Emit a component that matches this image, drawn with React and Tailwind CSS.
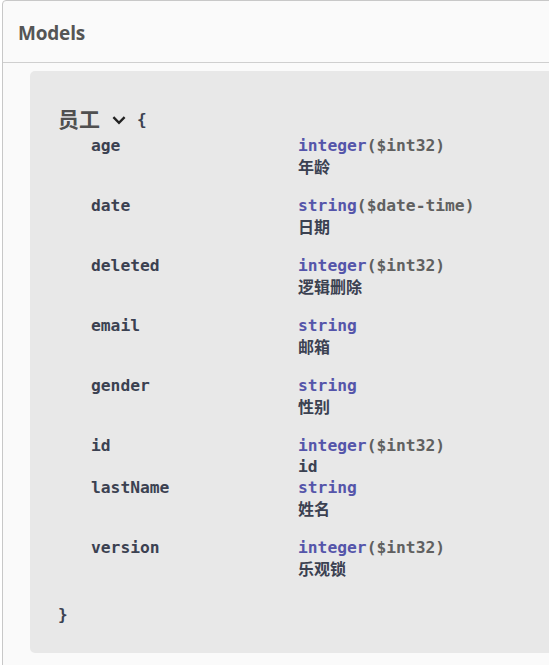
import React from 'react'

const mono = "font-['DejaVu_Sans_Mono','Liberation_Mono',monospace]"
const cjk = "font-['Noto_Sans_CJK_SC','Noto_Sans',sans-serif]"

const props = [
  { name: 'age', type: 'integer', format: '$int32', desc: '年龄' },
  { name: 'date', type: 'string', format: '$date-time', desc: '日期' },
  { name: 'deleted', type: 'integer', format: '$int32', desc: '逻辑删除' },
  { name: 'email', type: 'string', desc: '邮箱' },
  { name: 'gender', type: 'string', desc: '性别' },
  { name: 'id', type: 'integer', format: '$int32', desc: 'id', plain: true },
  { name: 'lastName', type: 'string', desc: '姓名' },
  { name: 'version', type: 'integer', format: '$int32', desc: '乐观锁' },
]

const Chevron = () => (
  <svg width="16" height="16" viewBox="0 0 20 20" className="mt-[2px]">
    <path d="M3 6.5 10 13.5 17 6.5" fill="none" stroke="#222" strokeWidth="3" />
  </svg>
)

const PropRow = ({ name, type, format, desc, plain }) => (
  <div className="grid grid-cols-[268px_1fr] text-[16.3px] font-semibold text-[#3b4151]">
    <div className={`${mono} pl-[61px] leading-[21px]`}>{name}</div>
    <div>
      <div className={`${mono} leading-[21px]`}>
        <span className="text-[#55a]">{type}</span>
        {format && <span className="text-[#606060]">({format})</span>}
      </div>
      {plain ? (
        <div className={`${mono} leading-[21px]`}>{desc}</div>
      ) : (
        <div className={`${cjk} text-[16px] font-bold leading-[21px] mb-[18px]`}>{desc}</div>
      )}
    </div>
  </div>
)

export default function App() {
  return (
    <div className="w-[549px] h-[665px] overflow-hidden bg-white">
      <section className="ml-[2px] mr-[-20px] h-[700px] bg-[#fafafa] border border-[#c8c8c8] rounded-[4px]">
        <div className="h-[62px] border-b border-[#cfcfcf] pl-[15px] pt-[3px] flex items-center">
          <h4 className="font-['Open_Sans',sans-serif] font-bold text-[19px] text-[#555] tracking-[-0.2px]">Models</h4>
        </div>
        <div className="ml-[27px] mt-[8px] h-[582px] bg-[#e8e8e8] rounded-[5px] pt-[34px]">
          <div className="flex items-center h-[28px] pl-[28px]">
            <span className={`${cjk} font-bold text-[21px] text-[#505050]`}>员工</span>
            <span className="ml-[11px]"><Chevron /></span>
            <span className={`${mono} ml-[10px] text-[16px] text-[#3b4151] font-semibold mt-[2px]`}>{'{'}</span>
          </div>
          <div className="mt-[2px]">
            {props.map((p) => (
              <PropRow key={p.name} {...p} />
            ))}
          </div>
          <div className={`${mono} pl-[28px] mt-[7px] leading-[21px] text-[16px] font-semibold text-[#3b4151]`}>{'}'}</div>
        </div>
      </section>
    </div>
  )
}
